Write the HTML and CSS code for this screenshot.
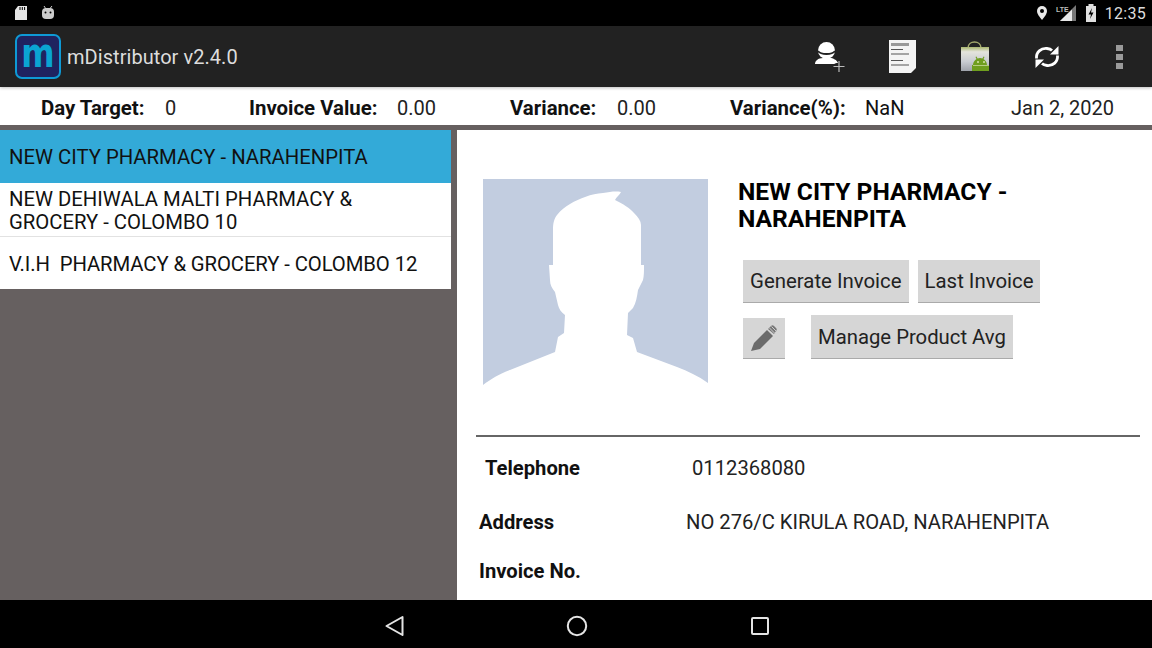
FILE: index.html
```html
<!DOCTYPE html>
<html lang="en">
<head>
    <meta charset="UTF-8">
    <meta name="viewport" content="width=device-width, initial-scale=1.0">
    <title>mDistributor</title>
    <link rel="stylesheet" href="styles.css">
</head>
<body>

    <!-- Status Bar -->
    <div class="status-bar">
        <div class="status-left">
            <svg class="sd-icon" width="14" height="16" viewBox="0 0 14 16"><path d="M4 1h9v14H1V5z" fill="#e6e6e6"/><path d="M6 2v3M8.300 2v3M10.600 2v3" stroke="#000" stroke-width="1"/></svg>
            <svg class="droid-icon" width="14" height="16" viewBox="0 0 14 16"><path d="M3 1l2 3M11 1L9 3.500" stroke="#ccc" stroke-width="1"/><rect x="1" y="3" width="12" height="11" rx="4" fill="#ccc"/><circle cx="4.500" cy="7.500" r="1" fill="#000"/><circle cx="9.500" cy="7.500" r="1" fill="#000"/></svg>
        </div>
        <div class="status-right">
            <svg class="pin-icon" width="12" height="16" viewBox="0 0 12 16"><path d="M6 1a5 5 0 0 0-5 5c0 3.500 5 9 5 9s5-5.500 5-9a5 5 0 0 0-5-5z" fill="#e8e8e8"/><circle cx="6" cy="6" r="2" fill="#000"/></svg>
            <svg class="signal-icon" width="20" height="16" viewBox="0 0 20 16"><path d="M20 0v16H4z" fill="#777"/><path d="M16 4.500V16H4z" fill="#e8e8e8"/><text x="0" y="7" class="lte-text">LTE</text></svg>
            <svg class="battery-icon" width="12" height="18" viewBox="0 0 12 18"><path d="M3.500 0h5v2H11v16H1V2h2.500z" fill="#e0e0e0"/><path d="M7 4L3.500 10.500H6L5 15l3.500-6.500H6z" fill="#000"/></svg>
            <span class="clock">12:35</span>
        </div>
    </div>

    <!-- Action Bar -->
    <header class="action-bar">
        <div class="app-logo"><span>m</span></div>
        <h1>mDistributor v2.4.0</h1>
        <nav class="action-icons">
            <svg class="user-add" width="32" height="32" viewBox="0 0 32 32">
                <circle cx="12.500" cy="9.500" r="8.500" fill="#fff"/>
                <path d="M4 10c3 4 14 4 17 0" fill="none" stroke="#222" stroke-width="1.800"/>
                <path d="M1 23c0-3 3-6 8-6h7c3 0 7 2 8 5-2 0-3 .5-4 1z" fill="#fff"/>
                <path d="M25 20v11M19.500 25.500h11" stroke="#bbb" stroke-width="1.200"/>
            </svg>
            <svg class="doc-icon" width="28" height="33" viewBox="0 0 28 33">
                <path d="M0 0h27v28l-5 5H0z" fill="#f4f4f4"/>
                <path d="M2 3h18v3H2z" fill="#999"/>
                <path d="M2 9.500h12M2 14h18M2 20.500h12M2 25h18" stroke="#555" stroke-width="1"/>
            </svg>
            <svg class="store-icon" width="30" height="31" viewBox="0 0 30 31">
                <defs>
                    <linearGradient id="bagFill" x1="0" y1="0" x2="0" y2="1">
                        <stop offset="0" stop-color="#a9b66e"/>
                        <stop offset="0.2" stop-color="#e4e4dc"/>
                        <stop offset="0.6" stop-color="#c9ccd2"/>
                        <stop offset="1" stop-color="#9ea2aa"/>
                    </linearGradient>
                </defs>
                <path d="M8 7c0-8 13-8 13 0" fill="none" stroke="#a3a86c" stroke-width="1.500"/>
                <path d="M1 6h28v24H1z" fill="url(#bagFill)"/>
                <path d="M12 30v-6h1c0-3 2-5 3.500-6l-1-2 1-.5 1 2a8 8 0 0 1 5 0l1-2 1 .5-1 2c1.500 1 3.500 3 3.500 6h2v6z" fill="#6f9e1e"/>
                <circle cx="18" cy="21" r="1" fill="#d5e3a8"/>
                <circle cx="24" cy="21" r="1" fill="#d5e3a8"/>
                <path d="M13 24.500h16" stroke="#c9d99a" stroke-width="0.800"/>
            </svg>
            <svg class="sync-icon" width="28" height="28" viewBox="0 0 28 28" fill="none">
                <path d="M3.500 15.500C3 9 8 5 14 5.500c2 .2 4 1 5 2" stroke="#fff" stroke-width="2.800"/>
                <path d="M25.500 3v8.500H17z" fill="#fff"/>
                <path d="M24.500 12.500C25 19 20 23 14 22.500c-2-.2-4-1-5-2" stroke="#fff" stroke-width="2.800"/>
                <path d="M2.500 25v-8.500H11z" fill="#fff"/>
            </svg>
            <div class="overflow-dots"><i></i><i></i><i></i></div>
        </nav>
    </header>

    <!-- Target Summary -->
    <section class="summary">
        <strong>Day Target:</strong><span>0</span>
        <strong>Invoice Value:</strong><span>0.00</span>
        <strong>Variance:</strong><span>0.00</span>
        <strong>Variance(%):</strong><span class="nan">NaN</span>
        <span>Jan 2, 2020</span>
    </section>

    <main class="content">
        <!-- Customer List -->
        <div class="customer-panel">
            <ul class="customer-list">
                <li class="selected">NEW CITY PHARMACY - NARAHENPITA</li>
                <li class="two-line">NEW DEHIWALA MALTI PHARMACY &amp; GROCERY - COLOMBO 10</li>
                <li class="last-item">V.I.H&nbsp; PHARMACY &amp; GROCERY - COLOMBO 12</li>
            </ul>
        </div>

        <!-- Customer Detail -->
        <section class="customer-detail">
            <div class="detail-top">
                <svg class="profile-photo" width="225" height="207" viewBox="0 0 225 207">
                    <rect width="225" height="207" fill="#c2cde0"/>
                    <path d="M0 207V206C8 200 16 195 27 191L72 173L75 158L81 154L82 136C78 133 76 130 75 126L72 113C69 109 67 106 67 101L66 86H70V51C70 44 71 40 74 36C78 31 82 28 87 25C97 19 108 15 120 14C127 13 132 12 138 13C137 16 133 18 132 21C140 25 147 29 151 34C155 38 158 42 158 46V86H161C161 92 161 97 160 101L155 111C154 118 153 124 150 129L145 134L144 156L150 159L154 173L194 188C205 192 215 197 225 204V207Z" fill="#fff"/>
                </svg>
                <div class="detail-side">
                    <h2>NEW CITY PHARMACY - NARAHENPITA</h2>
                    <div class="button-row first-row">
                        <button class="btn">Generate Invoice</button>
                        <button class="btn">Last Invoice</button>
                    </div>
                    <div class="button-row second-row">
                        <button class="btn btn-icon">
                            <svg width="30" height="30" viewBox="0 0 30 30"><path d="M2 28l3-8L18 7l6 6-13 13z" fill="#6b6b6b"/><path d="M19 6l3-3c1-1 2-1 3 0l2 2c1 1 1 2 0 3l-2 3z" fill="#777"/><path d="M20.500 5l5.500 5.500M22.500 3.500l5 5" stroke="#ccc" stroke-width="1"/></svg>
                        </button>
                        <button class="btn btn-wide">Manage Product Avg</button>
                    </div>
                </div>
            </div>
            <hr class="divider">
            <div class="info-row row-phone"><strong>Telephone</strong><span>0112368080</span></div>
            <div class="info-row row-address"><strong>Address</strong><span>NO 276/C KIRULA ROAD, NARAHENPITA</span></div>
            <div class="info-row row-invoice"><strong>Invoice No.</strong></div>
        </section>
    </main>

    <!-- Navigation Bar -->
    <footer class="nav-bar">
        <svg width="20" height="22" viewBox="0 0 20 22" fill="none"><path d="M18.500 2L2.500 11l16 9z" stroke="#e4e4e4" stroke-width="2" stroke-linejoin="round"/></svg>
        <svg width="22" height="22" viewBox="0 0 22 22" fill="none"><circle cx="11" cy="11" r="9.200" stroke="#e4e4e4" stroke-width="2"/></svg>
        <svg width="20" height="20" viewBox="0 0 20 20" fill="none"><rect x="2" y="2" width="16" height="16" rx="1" stroke="#e4e4e4" stroke-width="2"/></svg>
    </footer>

</body>
</html>
```
FILE: styles.css
```css
* {
    box-sizing: border-box;
}

html, body {
    margin: 0;
    height: 648px;
    overflow: hidden;
}

body {
    display: flex;
    flex-direction: column;
    background-color: #666060;
    font-family: Roboto, "Liberation Sans", sans-serif;
    color: #111;
}

/* Status Bar */
.status-bar {
    height: 26px;
    flex: none;
    display: flex;
    justify-content: space-between;
    align-items: center;
    background-color: #000;
}

.status-left {
    display: flex;
    align-items: center;
    gap: 13px;
    margin-left: 14px;
}

.status-right {
    display: flex;
    align-items: center;
    margin-right: 6px;
}

.signal-icon {
    margin-left: 8px;
}

.battery-icon {
    margin-left: 9px;
}

.lte-text {
    font-size: 7px;
    font-weight: 700;
    fill: #bbb;
    font-family: "Liberation Sans", sans-serif;
}

.clock {
    margin-left: 8px;
    font-size: 16px;
    letter-spacing: 0.3px;
    color: #ddd;
}

/* Action Bar */
.action-bar {
    height: 61px;
    flex: none;
    display: flex;
    align-items: center;
    position: relative;
    background-color: #222;
    padding-left: 15px;
    box-shadow: 0 1px 3px rgba(0, 0, 0, 0.25);
}

.app-logo {
    width: 46px;
    height: 45px;
    display: flex;
    justify-content: center;
    align-items: center;
    background-color: #1f2360;
    border: 2px solid #0e9ad6;
    border-radius: 7px;
}

.app-logo span {
    font-family: "DejaVu Sans", sans-serif;
    font-weight: 700;
    font-size: 32px;
    line-height: 32px;
    color: #0aa5d2;
    margin-top: -7px;
    transform: scaleY(1.3);
}

.action-bar h1 {
    margin: 0 0 0 6px;
    font-size: 20px;
    font-weight: 400;
    letter-spacing: 0.05px;
    color: #ddd;
}

.action-icons {
    display: flex;
    align-items: center;
    margin-left: auto;
}

.user-add {
    margin-right: 43px;
}

.doc-icon {
    margin-right: 43px;
}

.store-icon {
    margin-right: 43px;
}

.sync-icon {
    margin-right: 55px;
}

.overflow-dots {
    display: flex;
    flex-direction: column;
    gap: 3px;
    margin-right: 29px;
}

.overflow-dots i {
    display: block;
    width: 7px;
    height: 6px;
    background-color: #9a9a9a;
}

/* Target Summary */
.summary {
    height: 38px;
    flex: none;
    display: grid;
    grid-template-columns: 124px 84px 148px 113px 107px 113px 135px 146px auto;
    align-items: center;
    padding-left: 41px;
    padding-top: 4px;
    background-color: #fff;
    font-size: 20px;
}

.summary strong {
    font-size: 20.400px;
}

.summary span {
    color: #222;
}

.summary .nan {
    color: #111;
}

/* Main Content */
.content {
    flex: 1;
    display: flex;
    margin-top: 5px;
    min-height: 0;
}

.customer-panel {
    width: 451px;
    flex: none;
}

.customer-list {
    list-style: none;
    margin: 0;
    padding: 0;
    background-color: #fff;
    font-size: 20.300px;
}

.customer-list li {
    height: 53px;
    padding: 0 20px 0 9px;
    display: flex;
    align-items: center;
    line-height: 23px;
}

.customer-list .selected {
    background-color: #33aad8;
    padding-top: 2px;
}

.customer-list .two-line {
    height: 54px;
    border-bottom: 1px solid #e2e2e2;
    padding-top: 3px;
}

.customer-list .last-item {
    height: 52px;
    padding-top: 2px;
    letter-spacing: -0.1px;
}

/* Customer Detail */
.customer-detail {
    margin-left: 6px;
    flex: 1;
    background-color: #fff;
    padding: 49px 12px 0 19px;
    overflow: hidden;
}

.detail-top {
    display: flex;
    height: 256px;
    padding-left: 7px;
}

.profile-photo {
    flex: none;
}

.detail-side {
    margin-left: 30px;
}

.detail-side h2 {
    margin: -1px 0 0;
    width: 320px;
    font-size: 24.600px;
    line-height: 27px;
    font-weight: 700;
    color: #000;
}

.button-row {
    display: flex;
    margin-left: 5px;
}

.first-row {
    margin-top: 28px;
    gap: 9px;
}

.second-row {
    margin-top: 12px;
    align-items: flex-end;
    gap: 26px;
}

.btn {
    height: 43px;
    padding: 0 7px;
    border: none;
    border-bottom: 1px solid #aaa;
    background-color: #d6d6d6;
    font-family: Roboto, sans-serif;
    font-size: 20.400px;
    color: #222;
}

.btn-icon {
    width: 42px;
    height: 41px;
    padding: 5px 0 0 6px;
    display: flex;
}

.btn-wide {
    height: 44px;
    font-size: 20.300px;
}

.divider {
    margin: 0;
    border: none;
    border-top: 2px solid #666;
}

/* Info Rows */
.info-row {
    display: flex;
    font-size: 20.200px;
    line-height: 22px;
}

.info-row strong {
    width: 207px;
    flex: none;
}

.info-row span {
    color: #222;
}

.row-phone {
    margin-top: 20px;
    padding-left: 9px;
}

.row-address {
    margin-top: 32px;
    padding-left: 3px;
}

.row-invoice {
    margin-top: 27px;
    padding-left: 3px;
}

/* Navigation Bar */
.nav-bar {
    height: 48px;
    flex: none;
    display: flex;
    justify-content: center;
    align-items: center;
    gap: 162px;
    padding: 4px 0 0 2px;
    background-color: #000;
}
```
